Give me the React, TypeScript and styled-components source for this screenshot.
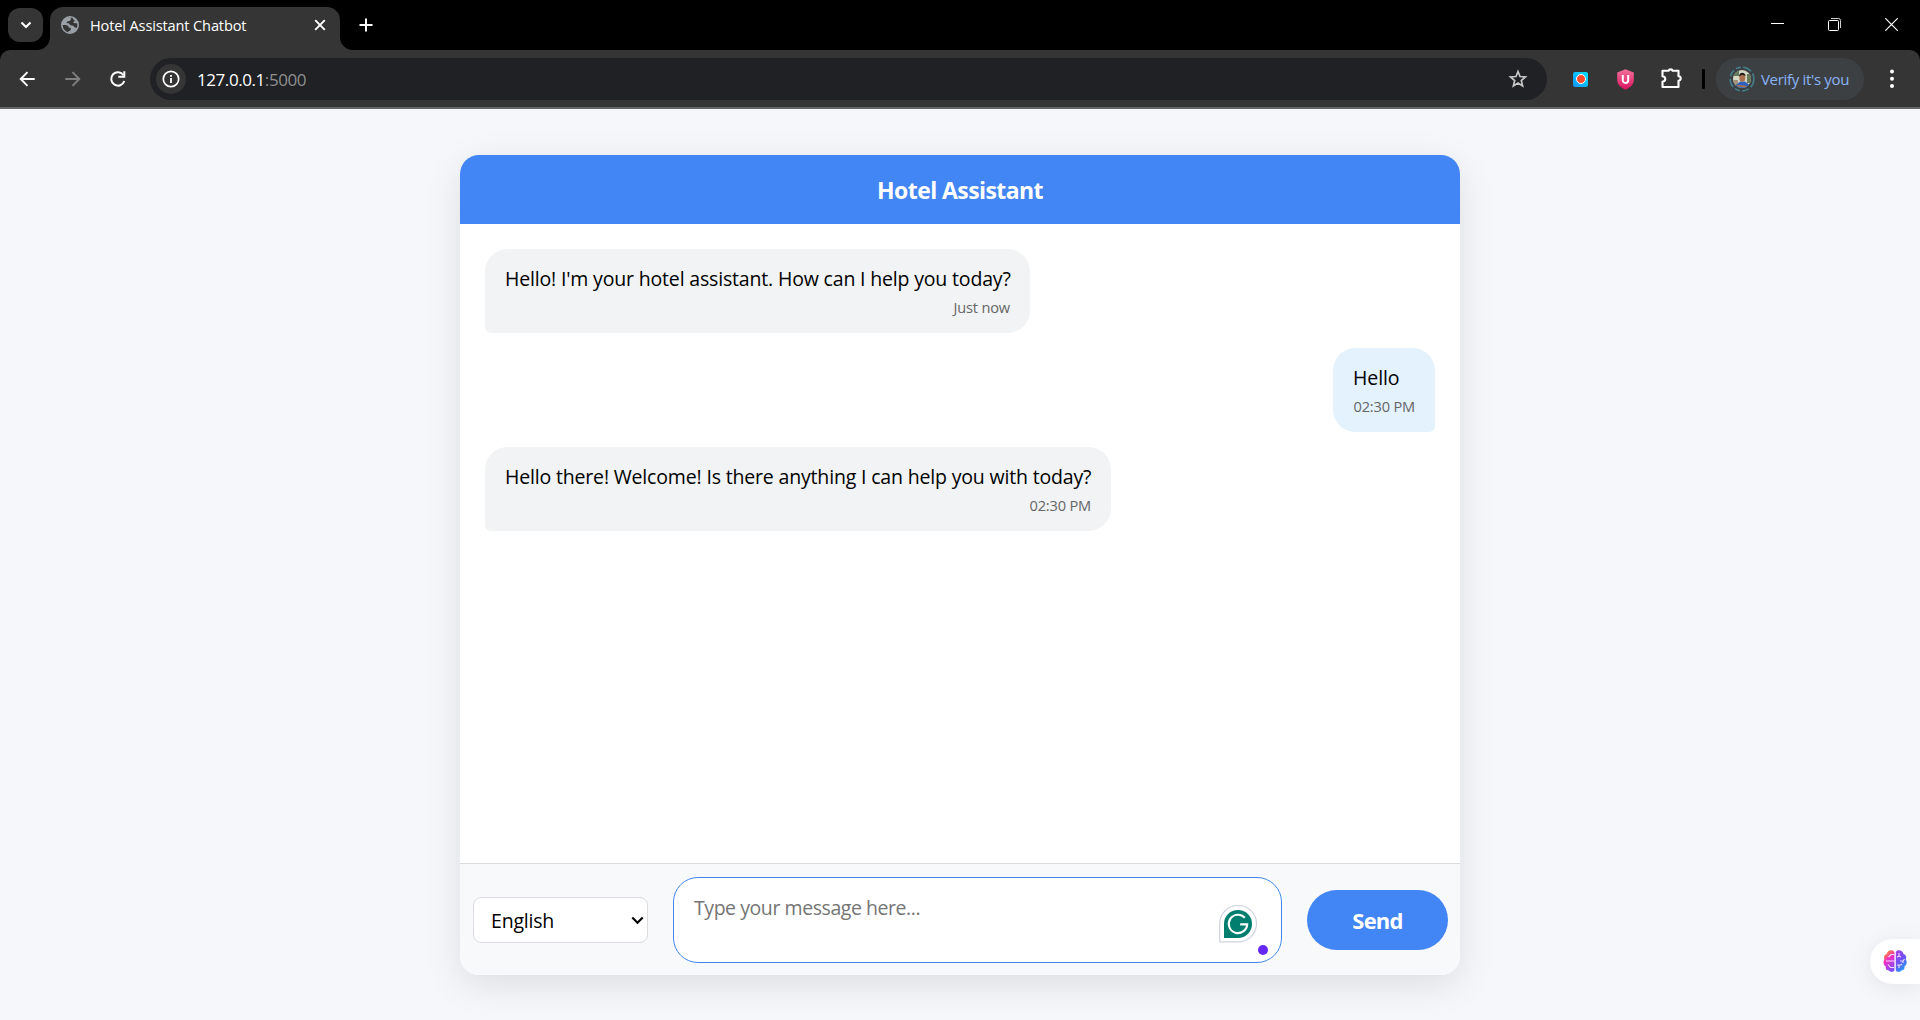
import React from "react";
import styled, { createGlobalStyle, css } from "styled-components";

const GlobalStyle = createGlobalStyle`
  * { box-sizing: border-box; }
  html, body { margin: 0; padding: 0; overflow: hidden; }
  body { font-family: "Open Sans", "Noto Sans", sans-serif; color: #000; }
  svg { display: block; flex: none; }
`;

const Window = styled.div`
  display: flex;
  flex-direction: column;
  width: 1920px;
  height: 1020px;
  background: #f5f7fb;
`;

/* ---------- browser chrome ---------- */

const TabStrip = styled.div`
  display: flex;
  height: 50px;
  background: #000;
  padding-left: 8px;
`;

const TabSearch = styled.div`
  display: flex;
  align-items: center;
  justify-content: center;
  width: 35px;
  height: 34px;
  margin: 8px 7px 0 0;
  border-radius: 12px;
  background: #353535;
`;

const Tab = styled.div`
  position: relative;
  display: flex;
  align-items: center;
  width: 290px;
  height: 43px;
  margin-top: 7px;
  padding: 0 11px 8px 11px;
  border-radius: 13px 13px 0 0;
  background: #353535;
`;

const TabFlare = styled.span<{ $side: "left" | "right" }>`
  position: absolute;
  bottom: 0;
  width: 13px;
  height: 13px;
  ${(p) =>
    p.$side === "left"
      ? css`
          left: -13px;
          background: radial-gradient(circle at 0 0, transparent 12.5px, #353535 13.5px);
        `
      : css`
          right: -13px;
          background: radial-gradient(circle at 100% 0, transparent 12.5px, #353535 13.5px);
        `}
`;

const TabTitle = styled.span`
  flex: 1;
  margin-left: 11px;
  font-size: 14.6px;
  letter-spacing: -0.15px;
  line-height: 20px;
  color: #fff;
  white-space: nowrap;
`;

const NewTab = styled.div`
  display: flex;
  align-items: center;
  margin-left: 19px;
  height: 50px;
`;

const WindowControls = styled.div`
  display: flex;
  margin-left: auto;
  height: 50px;
`;

const WindowControl = styled.div`
  display: flex;
  align-items: center;
  justify-content: center;
  width: 57px;
  height: 49px;
`;

const ToolbarBack = styled.div`
  background: #000;
`;

const Toolbar = styled.div`
  display: flex;
  align-items: center;
  height: 59px;
  padding: 1px 16px 0 16px;
  border-bottom: 2px solid #666;
  border-radius: 10px 10px 0 0;
  background: #353535;
`;

const NavIcons = styled.div`
  display: flex;
  gap: 23.5px;
  width: 134px;
`;

const AddressBar = styled.div`
  display: flex;
  align-items: center;
  width: 1397px;
  height: 42px;
  padding: 0 18px 0 6px;
  border-radius: 21px;
  background: #202124;
`;

const SiteInfo = styled.div`
  display: flex;
  align-items: center;
  justify-content: center;
  width: 30px;
  height: 30px;
  border-radius: 50%;
  background: #353535;
`;

const Url = styled.span`
  flex: 1;
  margin-left: 11px;
  font-size: 17px;
  letter-spacing: -0.43px;
  line-height: 24px;
  padding-top: 1px;
  color: #fff;
`;

const UrlPort = styled.span`
  color: #8f8f8f;
`;

const Extensions = styled.div`
  display: flex;
  align-items: center;
  margin-left: 26px;
`;

const RecorderIcon = styled.div`
  display: flex;
  align-items: center;
  justify-content: center;
  width: 15px;
  height: 15px;
  border-radius: 2px;
  background: linear-gradient(45deg, #1593ff, #00e5ff);
`;

const RecorderDot = styled.div`
  width: 10px;
  height: 10px;
  border: 1.5px solid #fff;
  border-radius: 50%;
  background: #ff4a2b;
`;

const Shield = styled.svg`
  margin-left: 29px;
`;

const Puzzle = styled.svg`
  margin-left: 24px;
`;

const Divider = styled.div`
  width: 3px;
  height: 20px;
  margin: 0 11px 0 18px;
  border-radius: 1px;
  background: #000;
`;

const ProfileChip = styled.div`
  display: flex;
  align-items: center;
  width: 148px;
  height: 42px;
  padding-left: 13px;
  border-radius: 21px;
  background: #3c4043;
`;

const ProfileLabel = styled.span`
  margin-left: 6px;
  font-size: 15px;
  letter-spacing: -0.32px;
  line-height: 20px;
  color: #8ab4f8;
  white-space: nowrap;
`;

const MenuDots = styled.svg`
  margin-left: auto;
  margin-right: 9px;
`;

/* ---------- chat page ---------- */

const Page = styled.main`
  flex: 1;
  display: flex;
  justify-content: center;
  align-items: flex-start;
  padding-top: 46px;
`;

const ChatCard = styled.section`
  display: flex;
  flex-direction: column;
  width: 1000px;
  height: 820px;
  border-radius: 19px;
  overflow: hidden;
  background: #fff;
  box-shadow: 0 10px 37px rgba(0, 0, 0, 0.1);
`;

const ChatHeader = styled.header`
  display: flex;
  align-items: center;
  justify-content: center;
  height: 69px;
  background: #4285f4;
  color: #fff;
  font-size: 23px;
  font-weight: 700;
  letter-spacing: -0.58px;
`;

const Messages = styled.div`
  flex: 1;
  display: flex;
  flex-direction: column;
  gap: 15px;
  padding: 25px;
`;

const Bubble = styled.div<{ $user?: boolean; $width: number }>`
  display: flex;
  flex-direction: column;
  align-self: ${(p) => (p.$user ? "flex-end" : "flex-start")};
  width: ${(p) => p.$width}px;
  height: 84px;
  padding: 15px 20px;
  border-radius: ${(p) => (p.$user ? "22.5px 22.5px 6px 22.5px" : "22.5px 22.5px 22.5px 6px")};
  background: ${(p) => (p.$user ? "#e3f2fd" : "#f1f3f4")};
`;

const BubbleText = styled.div<{ $spacing: number }>`
  font-size: 19.5px;
  letter-spacing: ${(p) => p.$spacing}px;
  line-height: 30px;
  white-space: nowrap;
`;

const BubbleTime = styled.div`
  align-self: flex-end;
  margin-top: 2px;
  font-size: 14.6px;
  letter-spacing: -0.18px;
  line-height: 22px;
  color: #666;
  white-space: nowrap;
`;

const Composer = styled.footer`
  display: flex;
  align-items: center;
  height: 112px;
  padding: 1px 12px 0 13px;
  border-top: 1px solid #dadce0;
  background: #f8f9fb;
`;

const LanguageSelect = styled.div`
  display: flex;
  align-items: center;
  justify-content: space-between;
  width: 175px;
  height: 46px;
  padding: 0 3px 0 17px;
  border: 1px solid #dadce0;
  border-radius: 8px;
  background: #fff;
  font-size: 19.5px;
  letter-spacing: -0.2px;
`;

const MessageBox = styled.div`
  position: relative;
  width: 609px;
  height: 86px;
  margin: 0 25px;
  padding: 15px 20px;
  border: 1px solid #4285f4;
  border-radius: 25px;
  background: #fff;
  font-size: 19.5px;
  letter-spacing: -0.44px;
  line-height: 30px;
  color: #757575;
`;

const GrammarBadge = styled.svg`
  position: absolute;
  right: 23px;
  top: 27px;
`;

const StatusDot = styled.span`
  position: absolute;
  right: 13px;
  bottom: 7px;
  width: 10px;
  height: 10px;
  border-radius: 50%;
  background: #6528f7;
`;

const SendButton = styled.div`
  display: flex;
  align-items: center;
  justify-content: center;
  width: 141px;
  height: 60px;
  border-radius: 30px;
  background: #4285f4;
  color: #fff;
  font-size: 22px;
  font-weight: 700;
  letter-spacing: -0.8px;
`;

const SideWidget = styled.div`
  position: absolute;
  left: 1870px;
  top: 939px;
  display: flex;
  align-items: center;
  width: 50px;
  height: 45px;
  padding: 0 0 1px 13px;
  border-radius: 23px 0 0 23px;
  background: #fff;
  box-shadow: 0 4px 24px rgba(0, 0, 0, 0.08);
`;

/* ---------- drawings ---------- */

const Globe = () => (
  <svg width="18" height="18" viewBox="0 0 18 18">
    <circle cx="9" cy="9" r="8.200" fill="#353535" stroke="#9aa0a6" strokeWidth="1.600" />
    <path
      d="M9 .8C4.500.8.9 4.500.9 9c3 0 4.500.2 5.600.6 1.300.6.4 1.900 1.700 2.200h1.500v2.300c-.6.9-1.600 1.200-2.500 1.200l-.2 1.500c4 1 8.200-1.400 9.600-5-1.700.1-3.100 0-3.600-1.200-.6-1.400-2.100-1-3.300-1.400-1-.4-1.300-1.700-2.500-1.900L5.600 7c.1-1.500 1.100-2 2.600-2.100 1.300-.1 1.500-1 1.800-2z"
      fill="#9aa0a6"
    />
    <path d="M12 1.500c-.5 1.500.3 2.300 1.500 2.500.4 1.300-.6 1.900-1.600 2.300 1 1 2.900 1.200 4.800.6C16 4.300 14.300 2.300 12 1.500z" fill="#9aa0a6" />
  </svg>
);

const GrammarIcon = () => (
  <GrammarBadge width="39" height="38" viewBox="0 0 39 38">
    <path d="M.7 36.900V18.500a18.400 18.200 0 1 1 18.400 18.400z" fill="#fff" stroke="#d0d3e0" strokeWidth="1.200" />
    <path d="M5 33V19A14 14 0 1 1 19 33z" fill="#027e6f" />
    <path d="M25.800 12.700A9.200 9.200 0 1 0 28.200 19.400H21.200" fill="none" stroke="#fff" strokeWidth="2.100" />
  </GrammarBadge>
);

const Brain = () => (
  <svg width="24" height="24" viewBox="0 0 24 24">
    <defs>
      <linearGradient id="brainLeft" x1="0.300" y1="0" x2="0.700" y2="1">
        <stop offset="0" stopColor="#ff9a1f" />
        <stop offset="0.400" stopColor="#f02fc2" />
        <stop offset="1" stopColor="#7a4dff" />
      </linearGradient>
      <linearGradient id="brainRight" x1="0.200" y1="0" x2="0.700" y2="1">
        <stop offset="0" stopColor="#a63ee8" />
        <stop offset="0.500" stopColor="#6a55f5" />
        <stop offset="1" stopColor="#1aa8f5" />
      </linearGradient>
    </defs>
    <path
      d="M11.400 3v18.500c-1 1.800-4.200 2-5.400 0-2.500 0-3.700-2-3.200-4C.4 16-.2 12.500 1.400 10.500.3 8 1.500 5.500 3.700 5 4 1.500 9.500-.5 11.400 3z"
      fill="url(#brainLeft)"
    />
    <path
      d="M12.800 3v18.500c1 1.800 4.200 2 5.400 0 2.500 0 3.700-2 3.200-4 2.400-1.500 3-5 1.400-7C23.900 8 22.700 5.500 20.500 5 20.200 1.500 14.700-.5 12.800 3z"
      fill="url(#brainRight)"
    />
    <path
      d="M11 5.500H8L5.500 8M3 12h8M5 15.500l2.500 3H11M16 4v3.500M14 8l2-1 2 1M17 12h3l1.500-2M20 12v2M14 16h4l1-1M16 16v3"
      fill="none"
      stroke="#f3dcff"
      strokeWidth="1.100"
    />
  </svg>
);

const Avatar = () => (
  <svg width="26" height="26" viewBox="0 0 26 26">
    <defs>
      <clipPath id="avatarClip">
        <circle cx="13" cy="13" r="9" />
      </clipPath>
    </defs>
    <circle cx="13" cy="13" r="11.900" fill="none" stroke="#44808c" strokeWidth="1.500" strokeDasharray="9 2.500 7 2.500 5 2.500" />
    <g clipPath="url(#avatarClip)">
      <rect width="26" height="26" fill="#d6d8c4" />
      <path d="M3 3h7v7H3zM18 8h6v9h-6z" fill="#66785a" />
      <path d="M3 14h6v8H3z" fill="#a3937c" />
      <path d="M7 24v-5l4-3.500h5l4 3 1 5.500z" fill="#2f60bd" />
      <ellipse cx="13.300" cy="11.800" rx="3" ry="4" fill="#a8714f" />
      <path d="M10 10.500c-.3-5 6.800-5 6.500-.3-2-1.700-4.500-1.500-6.500.3z" fill="#211d1c" />
      <path d="M8 19.500l9 1.200" stroke="#a8714f" strokeWidth="1.700" />
    </g>
  </svg>
);

type Message = { text: string; time: string; user?: boolean; width: number; spacing: number };

const messages: Message[] = [
  { text: "Hello! I'm your hotel assistant. How can I help you today?", time: "Just now", width: 545, spacing: -0.17 },
  { text: "Hello", time: "02:30 PM", user: true, width: 102, spacing: -0.1 },
  { text: "Hello there! Welcome! Is there anything I can help you with today?", time: "02:30 PM", width: 626, spacing: -0.17 },
];

export default function App() {
  return (
    <Window>
      <GlobalStyle />
      <TabStrip>
        <TabSearch>
          <svg width="12" height="8" viewBox="0 0 12 8">
            <path d="M1.500 1.500 6 6l4.500-4.500" fill="none" stroke="#fff" strokeWidth="2.100" />
          </svg>
        </TabSearch>
        <Tab>
          <TabFlare $side="left" />
          <TabFlare $side="right" />
          <Globe />
          <TabTitle>Hotel Assistant Chatbot</TabTitle>
          <svg width="18" height="12" viewBox="0 0 18 12">
            <path d="m4.200 1.200 9.600 9.600m0-9.600-9.600 9.600" stroke="#fff" strokeWidth="1.900" />
          </svg>
        </Tab>
        <NewTab>
          <svg width="14" height="14" viewBox="0 0 14 14">
            <path d="M7 .5v13M.5 7h13" stroke="#fff" strokeWidth="2" />
          </svg>
        </NewTab>
        <WindowControls>
          <WindowControl>
            <svg width="13" height="13" viewBox="0 0 13 13">
              <path d="M0 5.500h13" stroke="#fff" />
            </svg>
          </WindowControl>
          <WindowControl>
            <svg width="14" height="14" viewBox="0 0 14 14">
              <rect x=".5" y="2.500" width="10" height="10" rx="1" fill="none" stroke="#fff" />
              <path d="M3 .5h7.500q2 0 2 2V10" fill="none" stroke="#d0d0d0" />
            </svg>
          </WindowControl>
          <WindowControl>
            <svg width="13" height="13" viewBox="0 0 13 13">
              <path d="m.3.3 12.400 12.400m0-12.400L.3 12.700" stroke="#fff" strokeWidth="1.200" />
            </svg>
          </WindowControl>
        </WindowControls>
      </TabStrip>
      <ToolbarBack>
        <Toolbar>
          <NavIcons>
            <svg width="22" height="22" viewBox="0 0 22 22">
              <path d="M18.700 11H5.500M11.500 4.200 4.700 11l6.800 6.800" fill="none" stroke="#fff" strokeWidth="1.900" />
            </svg>
            <svg width="22" height="22" viewBox="0 0 22 22">
              <path d="M3.300 11h13.200M10.500 4.200l6.800 6.800-6.800 6.800" fill="none" stroke="#808080" strokeWidth="1.900" />
            </svg>
            <svg width="22" height="22" viewBox="0 0 22 22">
              <path d="M16.500 7.200A6.700 6.700 0 1 0 17.300 13" fill="none" stroke="#fff" strokeWidth="2" />
              <path d="M17.300 3.300v5.500h-6" fill="none" stroke="#fff" strokeWidth="2" />
            </svg>
          </NavIcons>
          <AddressBar>
            <SiteInfo>
              <svg width="18" height="18" viewBox="0 0 18 18">
                <circle cx="9" cy="9" r="7.700" fill="none" stroke="#fff" strokeWidth="1.700" />
                <path d="M9 8v5M9 5v1.800" stroke="#fff" strokeWidth="1.800" />
              </svg>
            </SiteInfo>
            <Url>
              127.0.0.1<UrlPort>:5000</UrlPort>
            </Url>
            <svg width="22" height="22" viewBox="0 0 22 22">
              <path
                d="m11 3.500 2 5 5.500.4-4.200 3.600 1.300 5.400-4.600-2.900-4.600 2.900 1.300-5.400L3.500 8.900 9 8.500z"
                fill="none"
                stroke="#c7c7c7"
                strokeWidth="1.700"
              />
            </svg>
          </AddressBar>
          <Extensions>
            <RecorderIcon>
              <RecorderDot />
            </RecorderIcon>
            <Shield width="17" height="21" viewBox="0 0 17 21">
              <defs>
                <linearGradient id="shieldFill" x1="0" y1="0" x2="0" y2="1">
                  <stop offset="0" stopColor="#f5709b" />
                  <stop offset="1" stopColor="#d9135f" />
                </linearGradient>
              </defs>
              <path d="M8.500.3 16.800 3.500V11c0 5-4 7.800-8.300 9.700C4.200 18.800.2 16 .2 11V3.500z" fill="url(#shieldFill)" />
              <path d="M5.800 6v5.200a2.700 2.700 0 0 0 5.400 0V6" fill="none" stroke="#fff" strokeWidth="2" />
            </Shield>
            <Puzzle width="26" height="24" viewBox="0 0 26 24">
              <path
                d="M5 3.800h5.500a2.200 2 0 0 1 4.200 0h5.800v5.500a2.200 2.200 0 0 1 0 4.400v6.300H4.500v-5.300c3.700-.7 3.700-4.700 0-5.400V3.800z"
                fill="none"
                stroke="#fff"
                strokeWidth="2.100"
                strokeLinejoin="round"
              />
            </Puzzle>
          </Extensions>
          <Divider />
          <ProfileChip>
            <Avatar />
            <ProfileLabel>Verify it's you</ProfileLabel>
          </ProfileChip>
          <MenuDots width="6" height="20" viewBox="0 0 6 20">
            <circle cx="3" cy="2.500" r="2" fill="#fff" />
            <circle cx="3" cy="9.700" r="2" fill="#fff" />
            <circle cx="3" cy="16.900" r="2" fill="#fff" />
          </MenuDots>
        </Toolbar>
      </ToolbarBack>
      <Page>
        <ChatCard>
          <ChatHeader>Hotel Assistant</ChatHeader>
          <Messages>
            {messages.map((m) => (
              <Bubble key={m.text} $user={m.user} $width={m.width}>
                <BubbleText $spacing={m.spacing}>{m.text}</BubbleText>
                <BubbleTime>{m.time}</BubbleTime>
              </Bubble>
            ))}
          </Messages>
          <Composer>
            <LanguageSelect>
              English
              <svg width="13" height="9" viewBox="0 0 13 9">
                <path d="M1.300 1.500 6.500 6.700l5.200-5.200" fill="none" stroke="#000" strokeWidth="2.100" />
              </svg>
            </LanguageSelect>
            <MessageBox>
              Type your message here...
              <GrammarIcon />
              <StatusDot />
            </MessageBox>
            <SendButton>Send</SendButton>
          </Composer>
        </ChatCard>
      </Page>
      <SideWidget>
        <Brain />
      </SideWidget>
    </Window>
  );
}
